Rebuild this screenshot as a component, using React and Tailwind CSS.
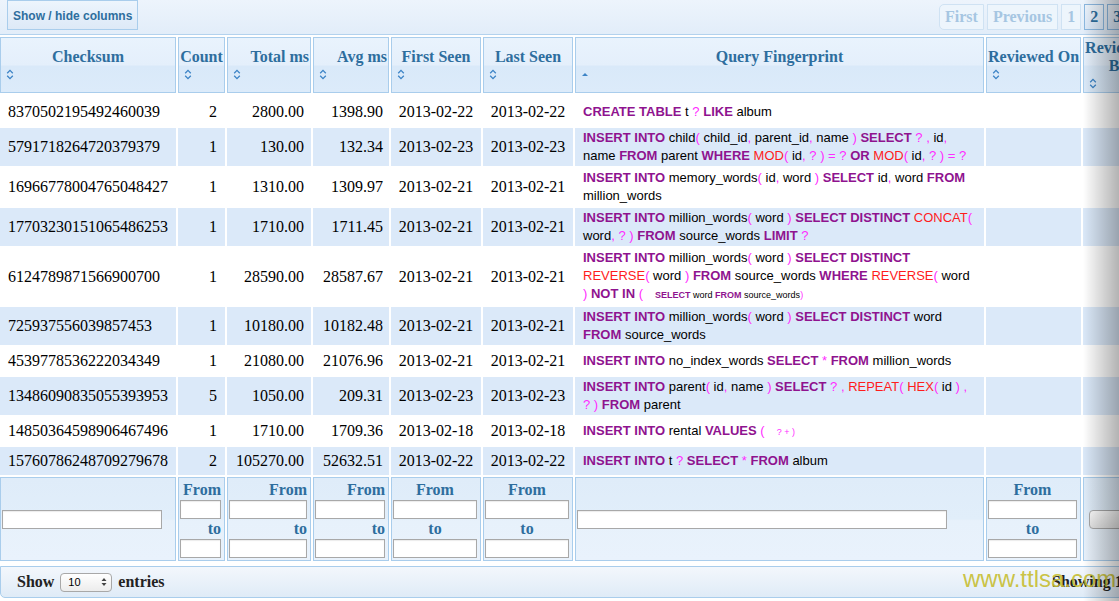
import React from 'react';

const KW = new Set(['CREATE', 'TABLE', 'LIKE', 'INSERT', 'INTO', 'SELECT', 'FROM', 'WHERE', 'OR', 'DISTINCT', 'LIMIT', 'NOT', 'IN', 'VALUES']);
const FN = new Set(['MOD', 'CONCAT', 'REVERSE', 'REPEAT', 'HEX']);

const serif = "font-['Liberation_Serif','Times_New_Roman',serif]";
const sans = "font-['Liberation_Sans',Arial,sans-serif]";

const cols = [176, 47, 84, 76, 90, 90, 409, 95, 70];

const rows = [
    ['8370502195492460039', '2', '2800.00', '1398.90', '2013-02-22', '2013-02-22', ['CREATE TABLE t ? LIKE album']],
    ['5791718264720379379', '1', '130.00', '132.34', '2013-02-23', '2013-02-23', ['INSERT INTO child( child_id, parent_id, name ) SELECT ? , id, name FROM parent WHERE MOD( id, ? ) = ? OR MOD( id, ? ) = ?']],
    ['16966778004765048427', '1', '1310.00', '1309.97', '2013-02-21', '2013-02-21', ['INSERT INTO memory_words( id, word ) SELECT id, word FROM million_words']],
    ['17703230151065486253', '1', '1710.00', '1711.45', '2013-02-21', '2013-02-21', ['INSERT INTO million_words( word ) SELECT DISTINCT CONCAT( word, ? ) FROM source_words LIMIT ?']],
    ['6124789871566900700', '1', '28590.00', '28587.67', '2013-02-21', '2013-02-21', ['INSERT INTO million_words( word ) SELECT DISTINCT REVERSE( word ) FROM source_words WHERE REVERSE( word ) NOT IN (', { small: 'SELECT word FROM source_words)' }]],
    ['725937556039857453', '1', '10180.00', '10182.48', '2013-02-21', '2013-02-21', ['INSERT INTO million_words( word ) SELECT DISTINCT word FROM source_words']],
    ['4539778536222034349', '1', '21080.00', '21076.96', '2013-02-21', '2013-02-21', ['INSERT INTO no_index_words SELECT * FROM million_words']],
    ['13486090835055393953', '5', '1050.00', '209.31', '2013-02-23', '2013-02-23', ['INSERT INTO parent( id, name ) SELECT ? , REPEAT( HEX( id ) , ? ) FROM parent']],
    ['14850364598906467496', '1', '1710.00', '1709.36', '2013-02-18', '2013-02-18', ['INSERT INTO rental VALUES (', { small: '? + )' }]],
    ['15760786248709279678', '2', '105270.00', '52632.51', '2013-02-22', '2013-02-22', ['INSERT INTO t ? SELECT * FROM album']],
];

const Tokens = ({ text }) =>
    text.split(/(\s+|[(),?=*+])/).filter(Boolean).map((t, i) => {
        if (KW.has(t)) return <span key={i} className="font-bold text-[#8f138f]">{t}</span>;
        if (FN.has(t)) return <span key={i} className="text-[#ff1c1c]">{t}</span>;
        if (/^[(),?=*+]$/.test(t)) return <span key={i} className="text-[#ff2bff]">{t}</span>;
        return <React.Fragment key={i}>{t}</React.Fragment>;
    });

const Sql = ({ parts }) =>
    parts.map((p, i) =>
        typeof p === 'string'
            ? <Tokens key={i} text={p} />
            : <span key={i} className="ml-[12px] text-[9px]"><Tokens text={p.small} /></span>
    );

const SortIcon = ({ asc }) => (
    <svg width="8" height="11" viewBox="0 0 8 11" className="text-[#3d84c6]">
        {asc ? (
            <path d="M1 7 L4 4 L7 7 Z" fill="currentColor" />
        ) : (
            <g fill="none" stroke="currentColor" strokeWidth="1.3">
                <path d="M1.2 4.2 L4 1.4 L6.8 4.2" />
                <path d="M1.2 6.8 L4 9.6 L6.8 6.8" />
            </g>
        )}
    </svg>
);

const headers = [
    { label: 'Checksum', align: 'text-center' },
    { label: 'Count', align: 'text-center' },
    { label: 'Total ms', align: 'text-right' },
    { label: 'Avg ms', align: 'text-right' },
    { label: 'First Seen', align: 'text-center' },
    { label: 'Last Seen', align: 'text-center' },
    { label: 'Query Fingerprint', align: 'text-center', asc: true },
    { label: 'Reviewed On', align: 'text-center' },
    { label: 'Reviewed By', align: 'text-center', wrap: true },
];

const glass = 'border border-[#a9cdec] bg-[linear-gradient(#e9f3fd,#e4effb_50%,#d9e9f9_52%,#dcebfa)]';
const filterGlass = 'border border-[#a9cdec] bg-[linear-gradient(#dfecf9,#e1eefa_50%,#e7f1fb_52%,#e9f2fc)]';

const Input = ({ className = '' }) => (
    <div className={`h-[19px] border border-[#a8a8a8] bg-white shadow-[inset_0_1px_1px_rgba(0,0,0,0.08)] ${className}`} />
);

const RangeFilter = ({ align }) => (
    <td className={`${filterGlass} pl-px pr-[3px] py-[2px] align-middle ${align}`}>
        <div className={`${serif} font-bold text-[16px] leading-5 text-[#2e6e9e]`}>From</div>
        <Input className="w-full" />
        <div className={`${serif} font-bold text-[16px] leading-5 text-[#2e6e9e]`}>to</div>
        <Input className="w-full" />
    </td>
);

const PageBtn = ({ children, faded, first }) => (
    <div
        className={`h-[26px] px-[5px] flex items-center border ${first ? 'rounded-l-[5px]' : ''} ${
            faded
                ? 'border-[#cfe2f3] bg-[#edf5fc] text-[#a6c6e2]'
                : 'border-[#8cb8e0] bg-[linear-gradient(#eef5fd,#dceafa)] text-[#2e6e9e]'
        }`}
    >
        {children}
    </div>
);

export default function App() {
    return (
        <div className="relative w-[1119px] h-[601px] overflow-hidden bg-white">
            {/* toolbar */}
            <div className="h-[35px] border-b border-[#b3d2ee] bg-[linear-gradient(#edf4fc,#e2edf9)] flex justify-between">
                <div className="pl-[7px]">
                    <div className={`${sans} h-[30px] px-[5px] pt-[2px] flex items-center border border-[#a9cdec] bg-[linear-gradient(#edf5fd,#dde9f7)] text-[12px] font-bold text-[#2e6e9e]`}>
                        Show / hide columns
                    </div>
                </div>
                <div className={`${serif} font-bold text-[16px] flex gap-[3px] pt-[4px] w-[180px] shrink-0`}>
                    <PageBtn faded first>First</PageBtn>
                    <PageBtn faded>Previous</PageBtn>
                    <PageBtn faded>1</PageBtn>
                    <PageBtn>2</PageBtn>
                    <PageBtn>3</PageBtn>
                    <PageBtn>4</PageBtn>
                </div>
            </div>

            {/* table */}
            <table className="table-fixed border-separate border-spacing-[2px] -ml-[2px] w-[1157px]">
                <colgroup>
                    {cols.map((w, i) => (
                        <col key={i} style={{ width: w }} />
                    ))}
                </colgroup>
                <thead>
                    <tr>
                        {headers.map((h) => (
                            <th key={h.label} className={`${glass} px-px py-px align-middle font-normal`}>
                                <div className={`${serif} font-bold text-[16px] leading-[18px] text-[#2e6e9e] ${h.align} ${h.wrap ? '' : 'whitespace-nowrap'}`}>
                                    {h.label}
                                </div>
                                <div className="h-4 flex items-center pl-[4px]">
                                    <SortIcon asc={h.asc} />
                                </div>
                            </th>
                        ))}
                    </tr>
                </thead>
                <tbody className={`${serif} text-[16px] leading-5 text-black`}>
                    {rows.map((r, i) => {
                        const bg = i % 2 ? 'bg-[#dbe9f9]' : 'bg-white';
                        const py = i === 0 ? 'pt-[7px] pb-1' : 'py-1';
                        const sqlPy = i === 0 ? 'pt-[4px] pb-px' : 'py-px';
                        return (
                            <tr key={r[0]}>
                                <td className={`${bg} ${py} pl-2 whitespace-nowrap`}>{r[0]}</td>
                                <td className={`${bg} ${py} pr-[8px] text-right`}>{r[1]}</td>
                                <td className={`${bg} ${py} pr-[7px] text-right`}>{r[2]}</td>
                                <td className={`${bg} ${py} pr-[6px] text-right`}>{r[3]}</td>
                                <td className={`${bg} ${py} text-center`}>{r[4]}</td>
                                <td className={`${bg} ${py} text-center`}>{r[5]}</td>
                                <td className={`${bg} ${sqlPy} ${sans} pl-2 pr-[10px] text-[13px] leading-[18px]`}>
                                    <Sql parts={r[6]} />
                                </td>
                                <td className={bg}></td>
                                <td className={bg}></td>
                            </tr>
                        );
                    })}
                    <tr>
                        <td className={`${filterGlass} pl-px align-middle`}>
                            <Input className="w-[160px]" />
                        </td>
                        <RangeFilter align="text-right" />
                        <RangeFilter align="text-right" />
                        <RangeFilter align="text-right" />
                        <RangeFilter align="text-center" />
                        <RangeFilter align="text-center" />
                        <td className={`${filterGlass} pl-px align-middle`}>
                            <Input className="w-[370px]" />
                        </td>
                        <RangeFilter align="text-center" />
                        <td className={`${filterGlass} pl-[5px] align-middle`}>
                            <div className="h-[19px] w-[60px] rounded-[4px] border border-[#a8a8a8] bg-[linear-gradient(#fdfdfd,#e4e4e4)]" />
                        </td>
                    </tr>
                </tbody>
            </table>

            {/* footer */}
            <div className={`${serif} mt-[3px] w-[1160px] h-[32px] flex items-center border border-[#a9cdec] rounded-bl-[5px] bg-[linear-gradient(#f3f7fc,#dfebf7)] text-[16px] font-bold text-[#222]`}>
                <div className="flex items-center pl-[16px] gap-[6px]">
                    <span>Show</span>
                    <div className={`${sans} h-[19px] w-[52px] rounded-[4px] border border-[#a8a8a8] bg-[linear-gradient(#ffffff,#ececec)] flex items-center justify-between pl-[7px] pr-[4px] text-[11px] font-normal text-black`}>
                        <span>10</span>
                        <svg width="6" height="10" viewBox="0 0 6 10">
                            <path d="M0.5 4 L3 1 L5.5 4 Z M0.5 6 L3 9 L5.5 6 Z" fill="#444" />
                        </svg>
                    </div>
                    <span>entries</span>
                </div>
                <div className="ml-auto w-[107px] overflow-hidden whitespace-nowrap">Showing 11 to 20 of 100 entries</div>
            </div>

            {/* watermark */}
            <div className={`${sans} pointer-events-none absolute left-[963px] top-[561px] text-[24px] text-[#c6bd2e]/90`}>
                www.ttlsa.com
            </div>

            {/* right edge shadow */}
            <div className="pointer-events-none absolute right-0 inset-y-0 w-[36px] bg-linear-to-r from-transparent to-black/30" />
        </div>
    );
}
